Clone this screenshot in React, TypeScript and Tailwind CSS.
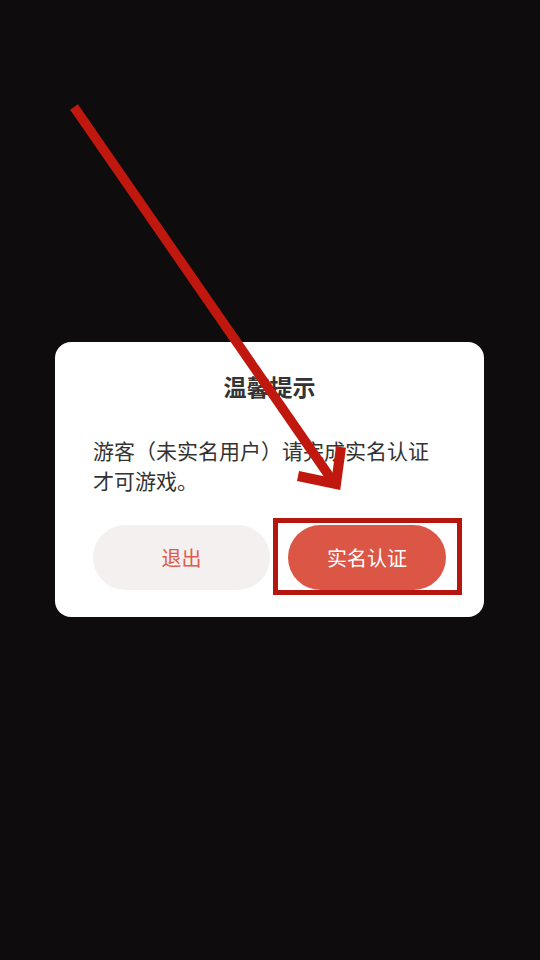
import React from "react";

const FONT = "font-['Noto_Sans_CJK_SC','Noto_Sans',sans-serif]";

function Arrow() {
  // annotation arrow drawn over the screen
  return (
    <svg
      className="pointer-events-none absolute inset-0"
      width={540}
      height={960}
      viewBox="0 0 540 960"
    >
      <line x1={74} y1={107} x2={332} y2={480} stroke="#c0180e" strokeWidth={9.5} />
      <polyline
        points="298,476 336,484 341,447"
        fill="none"
        stroke="#c0180e"
        strokeWidth={10}
        strokeLinejoin="miter"
      />
    </svg>
  );
}

export default function App() {
  return (
    <div className={`relative h-[960px] w-[540px] bg-[#0e0c0c] pl-[55px] pt-[342px] ${FONT}`}>
      <div className="w-[429px] rounded-[16px] bg-white px-[38px] pb-[27px] pt-[28px]">
        <h1 className="text-center text-[23px] font-bold leading-[32px] text-[#333333]">
          温馨提示
        </h1>
        <p className="mt-[33px] text-[21px] leading-[30px] text-[#333333]">
          游客（未实名用户）请完成实名认证才可游戏。
        </p>
        <div className="mt-[30px] flex items-center justify-between">
          <button className="h-[65px] w-[177px] rounded-full bg-[#f3f0ef] text-[20px] text-[#df5a4c]">
            退出
          </button>
          <div className="relative">
            <button className="h-[65px] w-[158px] rounded-full bg-[#dc5646] text-[20px] text-white">
              实名认证
            </button>
            <div className="pointer-events-none absolute -bottom-[5px] -left-[15px] -right-[16px] -top-[7px] border-[5px] border-[#b5160f]" />
          </div>
        </div>
      </div>
      <Arrow />
    </div>
  );
}
